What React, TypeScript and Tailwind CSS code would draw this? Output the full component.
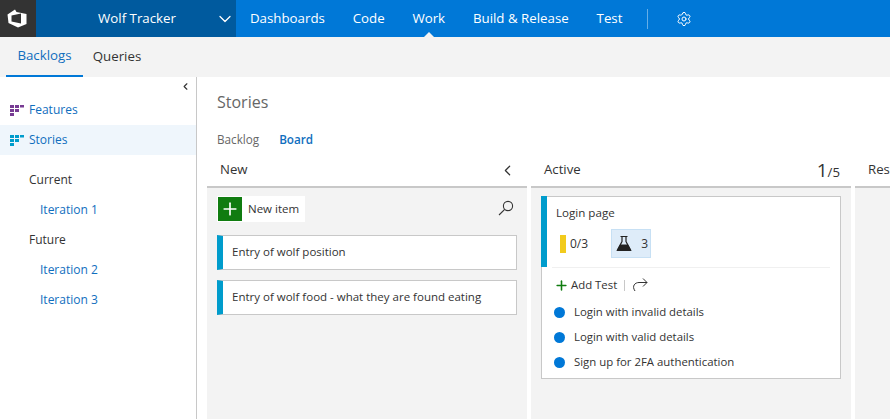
import { ChevronDown, ChevronLeft, Plus, Settings } from "lucide-react";

const NavItems = ["Dashboards", "Code", "Work", "Build & Release", "Test"];

function BacklogIcon({ color }: { color: string }) {
  return (
    <svg width="14" height="11" viewBox="0 0 14 11" className="shrink-0">
      <g fill={color}>
        <rect x="0" y="0" width="4" height="3" />
        <rect x="5" y="0" width="4" height="3" />
        <rect x="10" y="0" width="4" height="2.5" />
        <rect x="0" y="4" width="4" height="3" />
        <rect x="5" y="4" width="4" height="3" />
        <rect x="0" y="8" width="4" height="3" />
      </g>
    </svg>
  );
}

function Logo() {
  return (
    <svg width="20" height="19" viewBox="0 0 20 19" className="mr-[3px]">
      <path
        d="M0.5 5.5 L8 0.5 L9.5 3 L19.5 5 V15 L11 18.5 L1.5 14 Z M4.5 6.5 V12.5 L14 14.5 V4.5 Z"
        fill="#fff"
        fillRule="evenodd"
      />
    </svg>
  );
}

function Card({ title }: { title: string }) {
  return (
    <div className="h-[35px] mb-[10px] pb-[2px] flex items-center bg-white border border-[#c8c8c8] border-l-[6px] border-l-[#009ccc] pl-[9px] text-[11.5px] text-[#333]">
      {title}
    </div>
  );
}

function TestRow({ title }: { title: string }) {
  return (
    <div className="h-[25px] flex items-center text-[11.4px]">
      <span className="w-[11px] h-[11px] rounded-full bg-[#0078d7] ml-[12px] mr-[9px]" />
      <span className="-mt-[2px]">{title}</span>
    </div>
  );
}

export default function App() {
  return (
    <div className="w-[890px] h-[419px] overflow-hidden bg-white text-[12px] text-[#333] font-['Open_Sans',sans-serif]">
      {/* Top bar */}
      <div className="h-[37px] flex bg-[#0078d7] text-white text-[13.3px]">
        <div className="w-[36px] bg-[#333] flex items-center justify-center">
          <Logo />
        </div>
        <div className="w-[200px] bg-[#005a9e] flex items-center pl-[62px]">
          <span className="w-[117px]">Wolf Tracker</span>
          <ChevronDown size={20} strokeWidth={1.5} />
        </div>
        {NavItems.map((item) => (
          <div key={item} className="relative px-[13.9px] flex items-center">
            {item}
            {item === "Work" && (
              <span className="absolute bottom-0 left-1/2 -ml-[5px] border-x-[5px] border-x-transparent border-b-[5px] border-b-[#f3f3f3]" />
            )}
          </div>
        ))}
        <div className="w-px h-[20px] bg-[#66aee7] self-center ml-[11px]" />
        <div className="flex items-center ml-[28px]">
          <Settings size={16} strokeWidth={1.5} />
        </div>
      </div>

      {/* Sub nav */}
      <div className="h-[40px] bg-[#f3f3f3] flex pl-[6px] text-[13.3px]">
        <div className="w-[77px] flex items-center justify-center text-[#106ebe] border-b-2 border-[#0078d7]">
          Backlogs
        </div>
        <div className="w-[68px] flex items-center justify-center">Queries</div>
      </div>

      <div className="flex h-[342px]">
        {/* Sidebar */}
        <div className="w-[197px] shrink-0 border-r border-[#c8c8c8] relative">
          <ChevronLeft size={11} strokeWidth={2.5} className="absolute top-[4px] right-[5px] text-[#333]" />
          <div className="h-[30px] mt-[18px] flex items-center pl-[10px] gap-[5px] text-[#106ebe]">
            <BacklogIcon color="#773b93" />
            Features
          </div>
          <div className="h-[30px] flex items-center pl-[10px] gap-[5px] text-[#106ebe] bg-[#eff6fc]">
            <BacklogIcon color="#009ccc" />
            Stories
          </div>
          <div className="mt-[10px] pl-[29px]">
            <div className="h-[30px] flex items-center">Current</div>
            <div className="h-[30px] flex items-center pl-[11px] text-[#106ebe]">Iteration 1</div>
            <div className="h-[30px] flex items-center">Future</div>
            <div className="h-[30px] flex items-center pl-[11px] text-[#106ebe]">Iteration 2</div>
            <div className="h-[30px] flex items-center pl-[11px] text-[#106ebe]">Iteration 3</div>
          </div>
        </div>

        {/* Main */}
        <div className="flex-1 min-w-0">
          <div className="pl-[20px] pt-[13px] h-[46px] text-[16px] text-[#666]">Stories</div>
          <div className="pl-[20px] h-[34px] flex items-center gap-[20px] text-[11.7px]">
            <span className="text-[#666]">Backlog</span>
            <span className="font-semibold text-[#106ebe]">Board</span>
          </div>

          <div className="flex pl-[10px] gap-[4px]">
            {/* New column */}
            <div className="w-[320px] shrink-0">
              <div className="h-[31px] pb-[3px] flex items-center justify-between pl-[13px] pr-[11px] text-[13.2px] border-b-[2px] border-[#c8c8c8]">
                New
                <ChevronLeft size={17} strokeWidth={1.75} />
              </div>
              <div className="h-[231px] bg-[#f3f3f3] px-[10px] pt-[8px]">
                <div className="flex items-center justify-between h-[26px] mb-[13px]">
                  <div className="flex items-center bg-white h-[26px] w-[88px] text-[11.5px]">
                    <span className="w-[24px] h-[24px] bg-[#107c10] flex items-center justify-center text-white mr-[6px] ml-[1px]">
                      <Plus size={20} strokeWidth={2} />
                    </span>
                    <span className="-mt-[1px]">New item</span>
                  </div>
                  <svg width="16" height="16" viewBox="0 0 16 16" fill="none" stroke="#333" strokeWidth="1.1" className="mr-[3px] -mt-[3px]">
                    <circle cx="10" cy="6" r="4.6" />
                    <path d="M6.7 9.3 L1 15" />
                  </svg>
                </div>
                <Card title="Entry of wolf position" />
                <Card title="Entry of wolf food - what they are found eating" />
              </div>
            </div>

            {/* Active column */}
            <div className="w-[320px] shrink-0">
              <div className="h-[31px] pb-[3px] flex items-center justify-between pl-[13px] pr-[11px] text-[13.2px] border-b-[2px] border-[#c8c8c8]">
                Active
                <span className="leading-none">
                  <span className="text-[19px] text-[#333]">1</span>/5
                </span>
              </div>
              <div className="h-[231px] bg-[#f3f3f3] px-[10px] pt-[8px]">
                <div className="h-[183px] bg-white border border-[#c8c8c8] relative">
                  <div className="absolute -left-px -top-px w-[6px] h-[71px] bg-[#009ccc]" />
                  <div className="pl-[14px] pt-[7px] h-[32px] text-[11.6px]">Login page</div>
                  <div className="flex items-center pl-[18px] h-[29px]">
                    <span className="w-[6px] h-[18px] bg-[#f2cb1d] mr-[4px]" />
                    0/3
                    <div className="ml-[23px] w-[40px] h-[29px] bg-[#deecf9] border border-[#c7e0f4] flex items-center pl-[4px] gap-[9px]">
                      <svg width="16" height="17" viewBox="0 0 16 17" className="shrink-0">
                        <path d="M4.5 1.5 H11.5 M6 1.5 V6.5 L1.5 15 H14.5 L10 6.5 V1.5" fill="none" stroke="#222" strokeWidth="1.2" />
                        <path d="M4 9.5 H12 L15.5 16 H0.5 Z" fill="#222" />
                      </svg>
                      3
                    </div>
                  </div>
                  <div className="mx-[10px] mt-[9px] border-t border-[#f0f0f0]" />
                  <div className="flex items-center h-[32px] pt-[2px] pl-[12px] text-[11.4px]">
                    <Plus size={15} strokeWidth={2.5} className="text-[#107c10] mr-[2px]" />
                    Add Test
                    <span className="w-px h-[11px] bg-[#c8c8c8] mx-[7px]" />
                    <svg width="16" height="14" viewBox="0 0 16 14" fill="none" stroke="#333" strokeWidth="1">
                      <path d="M3 13 C-0.5 8 3 4.5 7 4.5 H15 M11 0.5 L15 4.5 L11 8.5" />
                    </svg>
                  </div>
                  <TestRow title="Login with invalid details" />
                  <TestRow title="Login with valid details" />
                  <TestRow title="Sign up for 2FA authentication" />
                </div>
              </div>
            </div>

            {/* Resolved column, cut off by the window */}
            <div className="w-[320px] shrink-0">
              <div className="h-[31px] pb-[3px] flex items-center pl-[13px] text-[13.2px] border-b-[2px] border-[#c8c8c8]">
                Resolved
              </div>
              <div className="h-[231px] bg-[#f3f3f3]" />
            </div>
          </div>
        </div>
      </div>
    </div>
  );
}
